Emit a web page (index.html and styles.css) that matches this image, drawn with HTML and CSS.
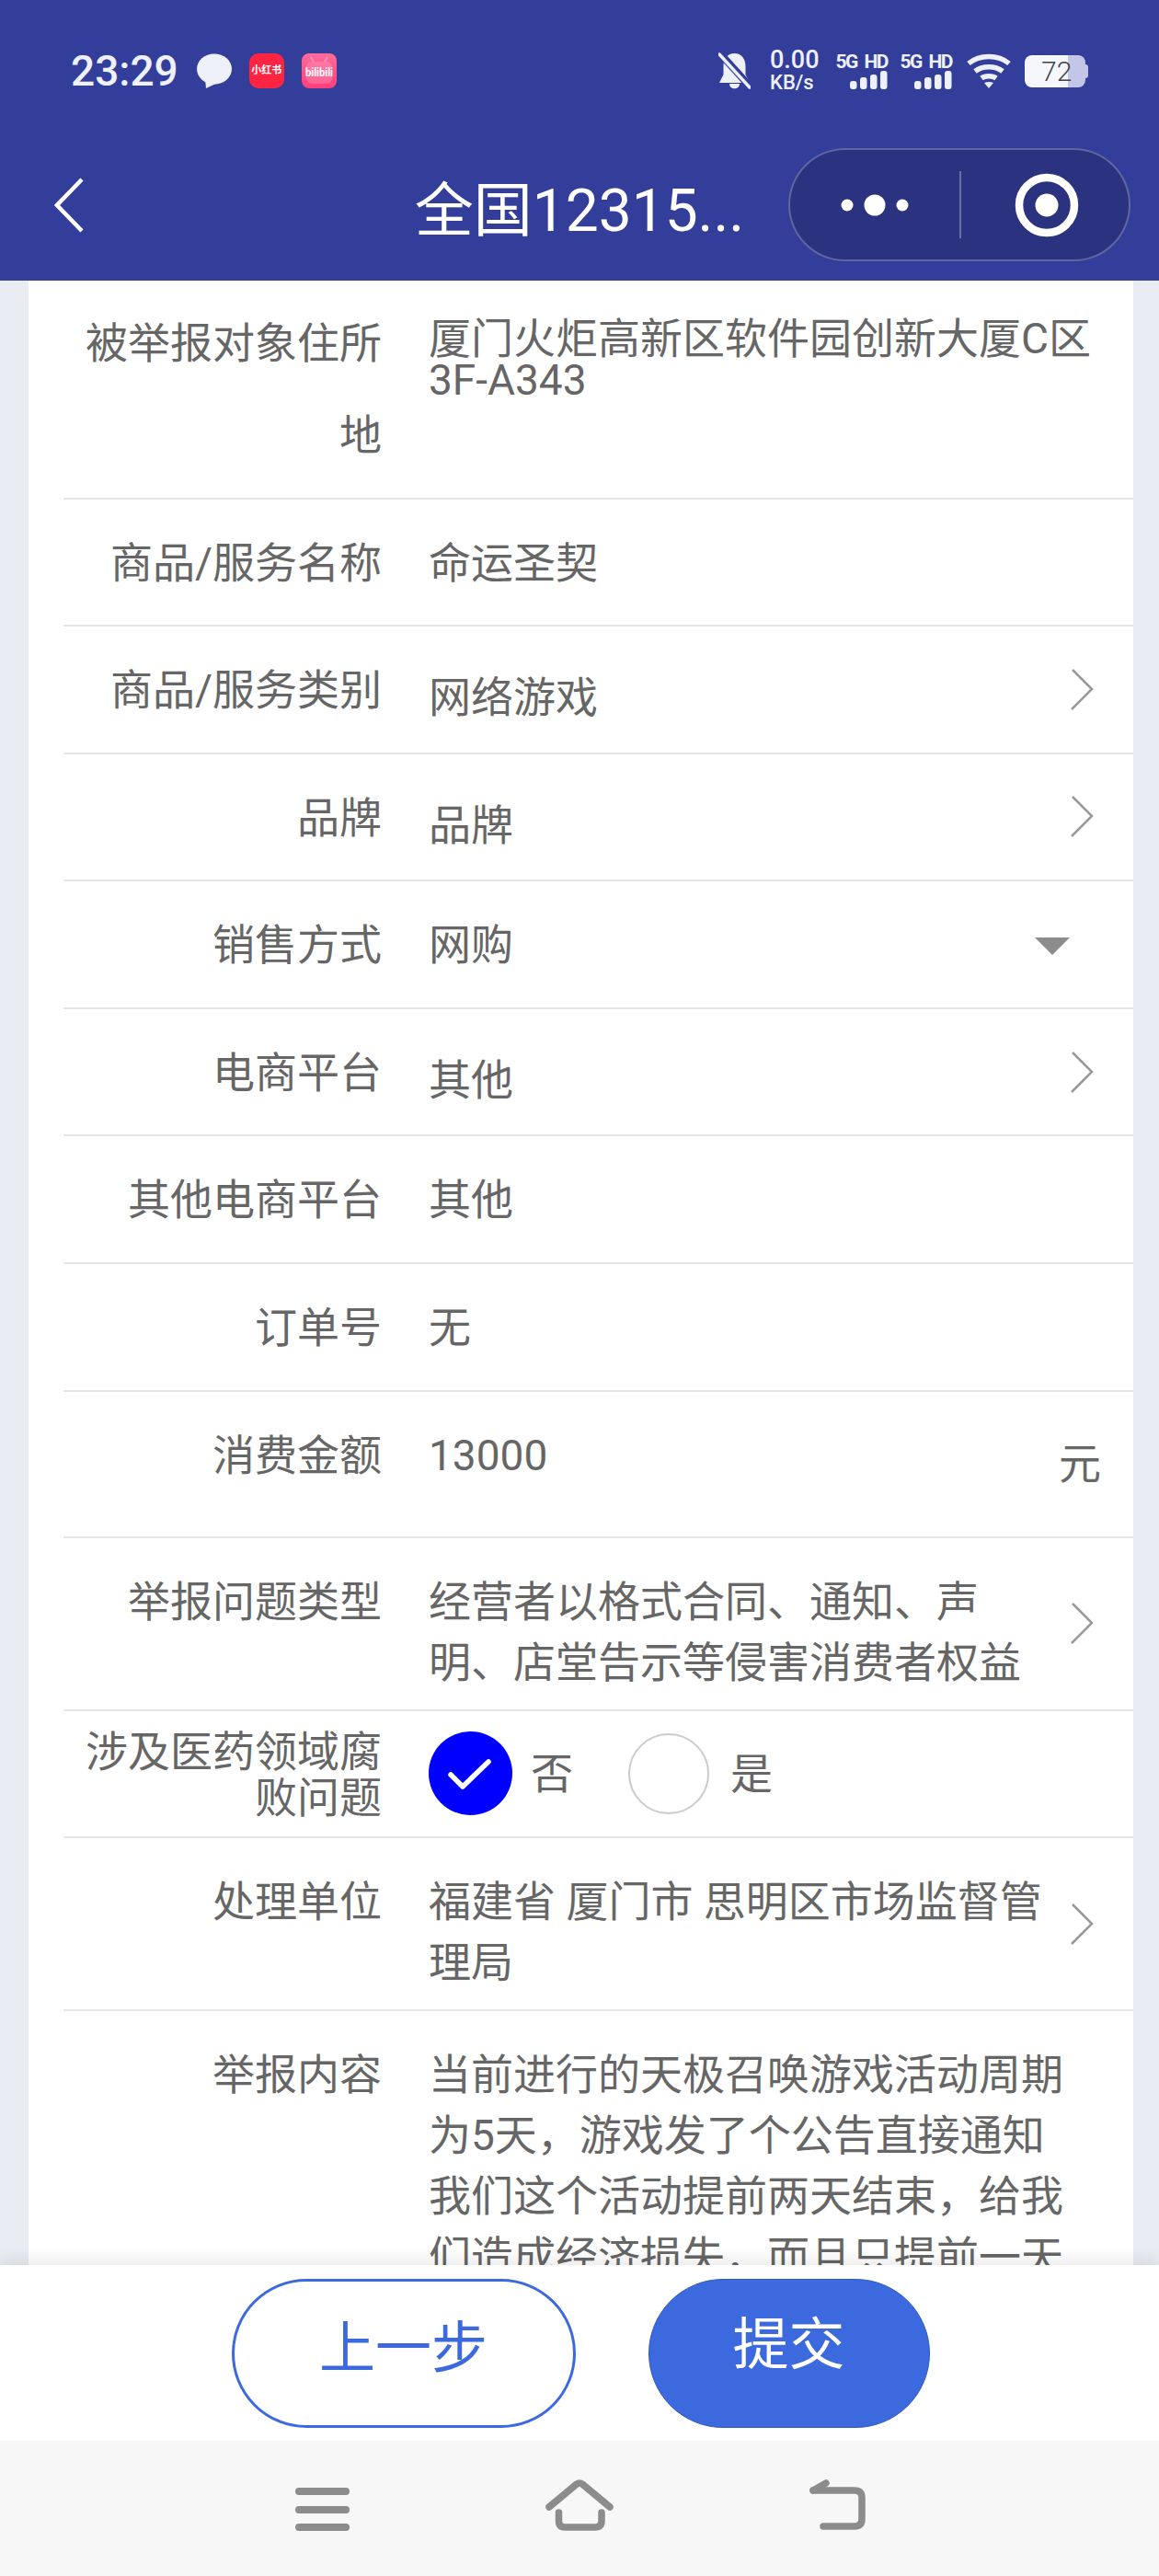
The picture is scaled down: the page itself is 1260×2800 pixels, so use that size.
FILE: index.html
```html
<!DOCTYPE html>
<html lang="zh-CN">

<head>
  <meta charset="UTF-8" />
  <title>全国12315</title>
  <link rel="stylesheet" href="styles.css">
</head>

<body>
  <header class="topbar">
    <div class="status">
      <span class="time">23:29</span>
      <svg class="bubble" width="38" height="38" viewBox="0 0 38 38"><ellipse cx="19" cy="17" rx="19" ry="16.500" fill="#eef0fa"/><path d="M9 28 L10 38 L25 31 Z" fill="#eef0fa"/></svg>
      <span class="app-red">小红书</span>
      <svg class="app-pink" width="38" height="38" viewBox="0 0 38 38">
        <defs><linearGradient id="pink" x1="0" y1="0" x2="0" y2="1"><stop offset="0" stop-color="#ff6b9b"/><stop offset="1" stop-color="#ff3f7c"/></linearGradient></defs>
        <rect width="38" height="38" rx="8" fill="url(#pink)"/>
        <rect x="5" y="9" width="28" height="24" rx="6" fill="#fff" opacity="0.16"/>
        <path d="M13 9 L10 4 M25 9 L28 4" stroke="#fff" stroke-width="2" opacity="0.3"/>
        <text x="4" y="25" textLength="30" lengthAdjust="spacingAndGlyphs" class="bili">bilibili</text>
      </svg>
      <div class="status-right">
        <svg width="35" height="40" viewBox="0 0 35 40">
          <path d="M17.500 1 C25 1 29.500 7 29.500 15 L29.500 24 L34 33 L1 33 L5.500 24 L5.500 15 C5.500 7 10 1 17.500 1 Z M12 34 H23 C23 41 12 41 12 34 Z" fill="#eef0fa"/>
          <path d="M-1 -2 L37 40" stroke="#333e9b" stroke-width="8"/>
          <path d="M1 2 L34 38" stroke="#eef0fa" stroke-width="3.500" stroke-linecap="round"/>
        </svg>
        <div class="speed"><span class="speed-num">0.00</span><span class="speed-unit">KB/s</span></div>
        <div class="signal">
          <span class="signal-text">5G HD</span>
          <svg width="41" height="20" viewBox="0 0 41 20"><rect x="0" y="11" width="7.500" height="9" rx="3" fill="#eef0fa"/><rect x="11" y="7" width="7.500" height="13" rx="3" fill="#eef0fa"/><rect x="22" y="4" width="7.500" height="16" rx="3" fill="#eef0fa"/><rect x="33" y="0" width="7.500" height="20" rx="3" fill="#eef0fa"/></svg>
        </div>
        <div class="signal">
          <span class="signal-text">5G HD</span>
          <svg width="41" height="20" viewBox="0 0 41 20"><rect x="0" y="11" width="7.500" height="9" rx="3" fill="#eef0fa"/><rect x="11" y="7" width="7.500" height="13" rx="3" fill="#eef0fa"/><rect x="22" y="4" width="7.500" height="16" rx="3" fill="#eef0fa"/><rect x="33" y="0" width="7.500" height="20" rx="3" fill="#eef0fa"/></svg>
        </div>
        <svg width="48" height="38" viewBox="0 0 48 38">
          <g fill="none" stroke="#eef0fa" stroke-width="5.500">
            <path d="M2 11 C14 1 34 1 46 11"/>
            <path d="M9 19.500 C17 13 31 13 39 19.500"/>
            <path d="M16 27 C20 24 28 24 32 27"/>
          </g>
          <path d="M19 32 C22 30.500 26 30.500 29 32 L24 38 Z" fill="#eef0fa"/>
        </svg>
        <div class="battery">72</div>
      </div>
    </div>
    <div class="titlebar">
      <svg class="back" width="32" height="60" viewBox="0 0 32 60"><path d="M30 2 L3 30 L30 58" fill="none" stroke="#fff" stroke-width="4.500"/></svg>
      <div class="title">全国12315...</div>
      <div class="capsule">
        <div class="capsule-part capsule-menu">
          <svg width="74" height="24" viewBox="0 0 74 24"><circle cx="7" cy="12" r="6.500" fill="#fff"/><circle cx="37" cy="12" r="11.500" fill="#fff"/><circle cx="67" cy="12" r="6.500" fill="#fff"/></svg>
        </div>
        <div class="capsule-line"></div>
        <div class="capsule-part capsule-target">
          <svg width="70" height="70" viewBox="0 0 70 70"><circle cx="35" cy="35" r="30" fill="none" stroke="#fff" stroke-width="8.500"/><circle cx="35" cy="35" r="12.500" fill="#fff"/></svg>
        </div>
      </div>
    </div>
  </header>

  <main class="content">
    <div class="card">
      <div class="row row-first">
        <div class="label">被举报对象住所地</div>
        <div class="value value-tight">厦门火炬高新区软件园创新大厦C区3F-A343</div>
      </div>
      <div class="row">
        <div class="label">商品/服务名称</div>
        <div class="value">命运圣契</div>
      </div>
      <div class="row">
        <div class="label">商品/服务类别</div>
        <div class="value value-low">网络游戏</div>
        <svg class="chevron" width="26" height="45" viewBox="0 0 26 45"><path d="M3 1 L24 22 L2 44" fill="none" stroke="#999" stroke-width="2.500"/></svg>
      </div>
      <div class="row">
        <div class="label">品牌</div>
        <div class="value value-low">品牌</div>
        <svg class="chevron" width="26" height="45" viewBox="0 0 26 45"><path d="M3 1 L24 22 L2 44" fill="none" stroke="#999" stroke-width="2.500"/></svg>
      </div>
      <div class="row">
        <div class="label">销售方式</div>
        <div class="value">网购</div>
        <div class="caret"></div>
      </div>
      <div class="row">
        <div class="label">电商平台</div>
        <div class="value value-low">其他</div>
        <svg class="chevron" width="26" height="45" viewBox="0 0 26 45"><path d="M3 1 L24 22 L2 44" fill="none" stroke="#999" stroke-width="2.500"/></svg>
      </div>
      <div class="row">
        <div class="label">其他电商平台</div>
        <div class="value">其他</div>
      </div>
      <div class="row">
        <div class="label">订单号</div>
        <div class="value">无</div>
      </div>
      <div class="row row-amount">
        <div class="label">消费金额</div>
        <div class="value">13000</div>
        <div class="unit">元</div>
      </div>
      <div class="row">
        <div class="label">举报问题类型</div>
        <div class="value">经营者以格式合同、通知、声明、店堂告示等侵害消费者权益</div>
        <svg class="chevron" width="26" height="45" viewBox="0 0 26 45"><path d="M3 1 L24 22 L2 44" fill="none" stroke="#999" stroke-width="2.500"/></svg>
      </div>
      <div class="row">
        <div class="label label-tight">涉及医药领域腐败问题</div>
        <div class="value radios">
          <span class="radio radio-on">
            <svg width="91" height="91" viewBox="0 0 91 91"><path d="M24 47 L37 60 L65 33" fill="none" stroke="#fff" stroke-width="5.500" stroke-linecap="round" stroke-linejoin="round"/></svg>
          </span>
          <span class="radio-text">否</span>
          <span class="radio radio-off"></span>
          <span class="radio-text">是</span>
        </div>
      </div>
      <div class="row">
        <div class="label">处理单位</div>
        <div class="value">福建省 厦门市 思明区市场监督管理局</div>
        <svg class="chevron" width="26" height="45" viewBox="0 0 26 45"><path d="M3 1 L24 22 L2 44" fill="none" stroke="#999" stroke-width="2.500"/></svg>
      </div>
      <div class="row">
        <div class="label">举报内容</div>
        <div class="value value-long">当前进行的天极召唤游戏活动周期为5天，游戏发了个公告直接通知我们这个活动提前两天结束，给我们造成经济损失，而且只提前一天</div>
      </div>
    </div>
  </main>

  <div class="actions">
    <button class="btn btn-back" type="button">上一步</button>
    <button class="btn btn-submit" type="button">提交</button>
  </div>

  <nav class="navbar">
    <svg width="59" height="56" viewBox="0 0 59 56"><rect y="9" width="59" height="8" rx="4" fill="#8c8c8c"/><rect y="29" width="59" height="8" rx="4" fill="#8c8c8c"/><rect y="48" width="59" height="8" rx="4" fill="#8c8c8c"/></svg>
    <svg width="74" height="56" viewBox="0 0 74 56">
      <g fill="none" stroke="#8c8c8c" stroke-width="7.500" stroke-linecap="round" stroke-linejoin="round">
        <path d="M4 30 L34 5 Q37 3 40 5 L70 30"/>
        <path d="M14.500 36 V45 Q14.500 52 21 52 H54 Q61 52 61 45 V36"/>
      </g>
    </svg>
    <svg width="61" height="56" viewBox="0 0 61 56">
      <g fill="none" stroke="#8c8c8c" stroke-width="7.500" stroke-linecap="round" stroke-linejoin="round">
        <path d="M4 12 H49 Q57 12 57 20 V43 Q57 51 49 51 H15"/>
        <path d="M4 12 L18 4"/>
      </g>
    </svg>
  </nav>
</body>

</html>
```

FILE: styles.css
```css
* {
  box-sizing: border-box;
  margin: 0;
  padding: 0;
}

body {
  font-family: Roboto, "Noto Sans CJK SC", sans-serif;
  background-color: #e9ecf2;
  color: #666;
  width: 1260px;
  height: 2800px;
  display: flex;
  flex-direction: column;
  overflow: hidden;
}

/* Top bar */
.topbar {
  height: 305px;
  flex: none;
  background-color: #333e9b;
}

.status {
  height: 140px;
  padding: 14px 80px 0 77px;
  display: flex;
  align-items: center;
  color: #eef0fa;
}

.time {
  font-size: 46px;
  font-weight: 500;
}

.bubble {
  margin-left: 20px;
}

.app-red {
  width: 38px;
  height: 38px;
  margin-left: 19px;
  border-radius: 10px;
  background-color: #ff2442;
  color: #fff;
  font-size: 11px;
  font-weight: 700;
  line-height: 38px;
  text-align: center;
}

.app-pink {
  margin-left: 19px;
}

.bili {
  fill: #fff;
  font-size: 13px;
  font-weight: 700;
}

.status-right {
  margin-left: auto;
  display: flex;
  align-items: center;
}

.speed {
  margin-left: 21px;
  width: 52px;
  display: flex;
  flex-direction: column;
  font-weight: 500;
}

.speed-num {
  font-size: 27px;
  line-height: 24px;
}

.speed-unit {
  font-size: 22px;
  line-height: 25px;
}

.signal {
  margin-left: 20px;
  width: 56px;
  display: flex;
  flex-direction: column;
  align-items: flex-end;
}

.signal + .signal {
  margin-left: 14px;
}

.signal + .signal + svg {
  margin-left: 16px;
}

.signal-text {
  font-size: 21px;
  font-weight: 700;
  letter-spacing: -1.500px;
  word-spacing: 4px;
  line-height: 20px;
  white-space: nowrap;
}

.battery {
  position: relative;
  width: 66px;
  height: 35px;
  margin-left: 15px;
  padding-left: 18px;
  border-radius: 8px;
  background: linear-gradient(90deg, #f6f7fc 47px, #c3c6e6 47px);
  color: #444;
  font-size: 30px;
  font-weight: 300;
  line-height: 35px;
}

.battery::after {
  content: "";
  position: absolute;
  right: -3px;
  top: 10px;
  width: 3px;
  height: 15px;
  border-radius: 0 3px 3px 0;
  background-color: #c3c6e6;
}

.titlebar {
  height: 165px;
  padding: 0 31px;
  display: grid;
  grid-template-columns: 1fr auto 1fr;
  align-items: center;
}

.back {
  margin-left: 28px;
}

.title {
  color: #fff;
  font-size: 64px;
}

.capsule {
  justify-self: end;
  width: 372px;
  height: 123px;
  display: flex;
  align-items: center;
  border: 2px solid rgba(255, 255, 255, 0.25);
  border-radius: 62px;
  background-color: #2b3380;
}

.capsule-part {
  display: flex;
  justify-content: center;
  align-items: center;
}

.capsule-menu {
  width: 184px;
}

.capsule-target {
  flex: 1;
  padding-left: 4px;
}

.capsule-line {
  width: 2px;
  height: 73px;
  background-color: rgba(255, 255, 255, 0.3);
}

/* Form card */
.content {
  flex: 1;
  min-height: 0;
  padding: 0 28px 0 31px;
  overflow: hidden;
}

.card {
  background-color: #fff;
}

.row {
  display: flex;
  min-height: 138.600px;
  margin-left: 38px;
  padding-right: 43px;
  border-bottom: 2px solid #e6e6e6;
  font-size: 46px;
}

.row:last-child {
  border-bottom: none;
}

.row-first {
  min-height: 237.500px;
}

.row-first .label {
  padding-top: 18px;
}

.row-amount {
  min-height: 159px;
}

.label {
  flex: none;
  width: 346px;
  padding: 19px 0 17px;
  line-height: 100px;
  text-align: right;
}

.label-tight {
  line-height: 50px;
}

.value {
  flex: 1;
  min-width: 0;
  margin-left: 51px;
  padding: 36px 0 18px;
  line-height: 66px;
}

.value-low {
  padding-top: 44px;
}

.value-tight {
  padding-top: 41px;
  line-height: 45px;
}

.value-long {
  padding-right: 26px;
}

.chevron {
  flex: none;
  align-self: center;
  margin-left: 16px;
}

.caret {
  flex: none;
  align-self: center;
  width: 0;
  height: 0;
  margin: 3px 26px 0 0;
  border-top: 19px solid #8c8c8c;
  border-left: 19px solid transparent;
  border-right: 19px solid transparent;
}

.unit {
  flex: none;
  margin-right: -8px;
  padding-top: 45px;
  line-height: 66px;
}

/* Radios */
.radios {
  display: flex;
  align-items: center;
  padding: 0;
}

.radio {
  width: 91px;
  height: 91px;
  border: 2px solid #ccc;
  border-radius: 50%;
}

.radio-on {
  border: none;
  background-color: #0000ff;
}

.radio-off {
  width: 88px;
  height: 88px;
  margin-right: 3px;
}

.radio svg {
  display: block;
}

.radio-text {
  width: 46px;
  margin: 0 60px 0 20px;
}

/* Bottom actions */
.actions {
  position: relative;
  flex: none;
  height: 191px;
  padding: 15px 0 0 2px;
  display: flex;
  justify-content: center;
  gap: 79px;
  background-color: #fff;
  box-shadow: 0 -4px 18px rgba(0, 0, 0, 0.1);
}

.btn {
  height: 162px;
  border-radius: 81px;
  font-family: inherit;
  font-size: 61px;
}

.btn-back {
  width: 374px;
  padding-bottom: 22px;
  border: 3px solid #3c6ade;
  background-color: #fff;
  color: #3c6ade;
}

.btn-submit {
  width: 306px;
  padding-bottom: 30px;
  border: 1px solid #2f5bc0;
  background-color: #3c6ade;
  color: #fff;
}

.navbar {
  position: relative;
  flex: none;
  height: 147px;
  padding: 42px 0 0 2px;
  display: flex;
  justify-content: center;
  align-items: flex-start;
  gap: 213px;
  background-color: #f7f7f7;
}
```
